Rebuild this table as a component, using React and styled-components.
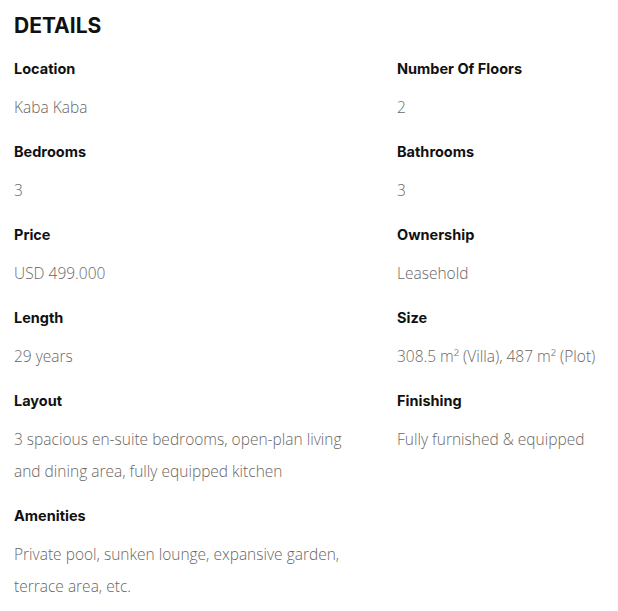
import React from 'react';
import styled, { createGlobalStyle } from 'styled-components';

const GlobalStyle = createGlobalStyle`
  html, body {
    margin: 0;
    padding: 0;
    background: #fff;
  }
`;

const Section = styled.section`
  padding: 12px 0 0 14px;
  width: 618px;
  box-sizing: border-box;
`;

const Title = styled.h2`
  margin: 0 0 19px 0;
  font-family: 'Inter', 'Liberation Sans', sans-serif;
  font-weight: 700;
  font-size: 21px;
  line-height: 28px;
  color: #111;
`;

const Grid = styled.div`
  display: grid;
  grid-template-columns: 383px 1fr;
  row-gap: 19px;
`;

const Item = styled.div`
  display: flex;
  flex-direction: column;
`;

const Label = styled.div`
  font-family: 'Inter', 'Liberation Sans', sans-serif;
  font-weight: 700;
  font-size: 14.5px;
  line-height: 20px;
  color: #111;
  margin-bottom: 12px;
`;

const Value = styled.div`
  max-width: 332px;
  font-family: 'Open Sans', 'Noto Sans', sans-serif;
  font-weight: 300;
  font-size: 15.5px;
  line-height: 32px;
  color: #6b6663;
`;

const details = [
  ['Location', 'Kaba Kaba'],
  ['Number Of Floors', '2'],
  ['Bedrooms', '3'],
  ['Bathrooms', '3'],
  ['Price', 'USD 499.000'],
  ['Ownership', 'Leasehold'],
  ['Length', '29 years'],
  ['Size', '308.5 m² (Villa), 487 m² (Plot)'],
  ['Layout', '3 spacious en-suite bedrooms, open-plan living and dining area, fully equipped kitchen'],
  ['Finishing', 'Fully furnished & equipped'],
  ['Amenities', 'Private pool, sunken lounge, expansive garden, terrace area, etc.'],
];

const App = () => (
  <>
    <GlobalStyle />
    <Section>
      <Title>DETAILS</Title>
      <Grid>
        {details.map(([label, value]) => (
          <Item key={label}>
            <Label>{label}</Label>
            <Value>{value}</Value>
          </Item>
        ))}
      </Grid>
    </Section>
  </>
);

export default App;
